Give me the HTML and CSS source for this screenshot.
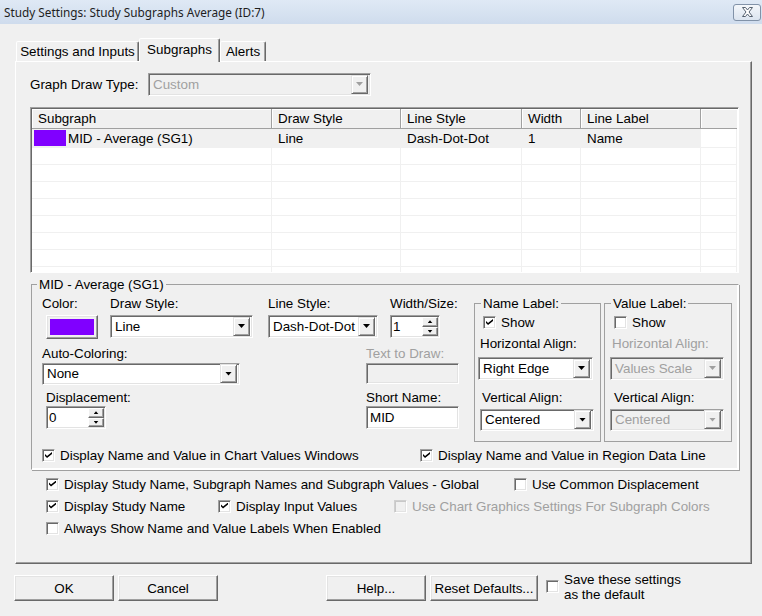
FILE: index.html
```html
<!doctype html>
<html>
    <head>
        <meta charset="UTF-8">
        <title>Study Settings</title>
        <link rel="stylesheet" href="styles.css">
    </head>
    <body>
        <div class="titlebar">
            <span class="title">Study Settings: Study Subgraphs Average (ID:7)</span>
            <div class="close">
                <svg width="13" height="10" viewBox="0 0 13 10"><path d="M1.5 0.5h3l2 2.5 2-2.5h3l-3.5 4.5 3.5 4.5h-3l-2-2.5-2 2.5h-3l3.5-4.5z" fill="#fff" stroke="#55606f" stroke-width="1" stroke-linejoin="round"/></svg>
            </div>
        </div>

        <div class="tabs">
            <div class="tab t-settings">Settings and Inputs</div>
            <div class="tab t-sub active">Subgraphs</div>
            <div class="tab t-alerts">Alerts</div>
        </div>

        <div class="panel">
            <div class="drawtype">
                <span class="dt-label">Graph Draw Type:</span>
                <div class="combo off c-gdt"><span class="val">Custom</span><span class="drop"></span></div>
            </div>

            <div class="list">
                <div class="lrow lhead">
                    <div class="c1">Subgraph</div>
                    <div class="c2">Draw Style</div>
                    <div class="c3">Line Style</div>
                    <div class="c4">Width</div>
                    <div class="c5">Line Label</div>
                    <div class="c6"></div>
                </div>
                <div class="lrow ldata">
                    <div class="c1"><span class="swatch"></span>MID - Average (SG1)</div>
                    <div class="c2">Line</div>
                    <div class="c3">Dash-Dot-Dot</div>
                    <div class="c4">1</div>
                    <div class="c5">Name</div>
                    <div class="c6"></div>
                </div>
                <div class="lrow"><div class="c1"></div><div class="c2"></div><div class="c3"></div><div class="c4"></div><div class="c5"></div><div class="c6"></div></div>
                <div class="lrow"><div class="c1"></div><div class="c2"></div><div class="c3"></div><div class="c4"></div><div class="c5"></div><div class="c6"></div></div>
                <div class="lrow"><div class="c1"></div><div class="c2"></div><div class="c3"></div><div class="c4"></div><div class="c5"></div><div class="c6"></div></div>
                <div class="lrow"><div class="c1"></div><div class="c2"></div><div class="c3"></div><div class="c4"></div><div class="c5"></div><div class="c6"></div></div>
                <div class="lrow"><div class="c1"></div><div class="c2"></div><div class="c3"></div><div class="c4"></div><div class="c5"></div><div class="c6"></div></div>
                <div class="lrow"><div class="c1"></div><div class="c2"></div><div class="c3"></div><div class="c4"></div><div class="c5"></div><div class="c6"></div></div>
                <div class="lrow"><div class="c1"></div><div class="c2"></div><div class="c3"></div><div class="c4"></div><div class="c5"></div><div class="c6"></div></div>
                <div class="lrow"><div class="c1"></div><div class="c2"></div><div class="c3"></div><div class="c4"></div><div class="c5"></div><div class="c6"></div></div>
            </div>

            <fieldset class="group">
                <legend>MID - Average (SG1)</legend>
                <div class="gbody">
                    <div class="gleft">
                        <div class="frow rowa">
                            <div class="field f-color">
                                <span>Color:</span>
                                <div class="colorbtn"><span class="chip"></span></div>
                            </div>
                            <div class="field f-draw">
                                <span>Draw Style:</span>
                                <div class="combo c-draw"><span class="val">Line</span><span class="drop"></span></div>
                            </div>
                            <div class="field f-line">
                                <span>Line Style:</span>
                                <div class="combo c-line"><span class="val">Dash-Dot-Dot</span><span class="drop"></span></div>
                            </div>
                            <div class="field">
                                <span>Width/Size:</span>
                                <div class="spin s-width"><span class="val">1</span><span class="updown"><i class="up"></i><i class="dn"></i></span></div>
                            </div>
                        </div>
                        <div class="frow rowb">
                            <div class="field f-auto">
                                <span>Auto-Coloring:</span>
                                <div class="combo c-auto"><span class="val">None</span><span class="drop"></span></div>
                            </div>
                            <div class="field">
                                <span class="dim">Text to Draw:</span>
                                <div class="edit off e-text"></div>
                            </div>
                        </div>
                        <div class="frow rowc">
                            <div class="field f-disp">
                                <span>Displacement:</span>
                                <div class="spin s-disp"><span class="val">0</span><span class="updown"><i class="up"></i><i class="dn"></i></span></div>
                            </div>
                            <div class="field f-short">
                                <span>Short Name:</span>
                                <div class="edit e-short">MID</div>
                            </div>
                        </div>
                    </div>

                    <fieldset class="lgroup g-name">
                        <legend>Name Label:</legend>
                        <label class="chkline show"><span class="chk on"></span>Show</label>
                        <div class="glbl gl-h">Horizontal Align:</div>
                        <div class="combo c-nh"><span class="val">Right Edge</span><span class="drop"></span></div>
                        <div class="glbl gl-v">Vertical Align:</div>
                        <div class="combo c-nv"><span class="val">Centered</span><span class="drop"></span></div>
                    </fieldset>

                    <fieldset class="lgroup g-value">
                        <legend>Value Label:</legend>
                        <label class="chkline show"><span class="chk"></span>Show</label>
                        <div class="glbl gl-h dim">Horizontal Align:</div>
                        <div class="combo off c-vh"><span class="val">Values Scale</span><span class="drop"></span></div>
                        <div class="glbl gl-v">Vertical Align:</div>
                        <div class="combo off c-vv"><span class="val">Centered</span><span class="drop"></span></div>
                    </fieldset>
                </div>

                <div class="gchecks">
                    <label class="chkline gc-first"><span class="chk on"></span>Display Name and Value in Chart Values Windows</label>
                    <label class="chkline"><span class="chk on"></span>Display Name and Value in Region Data Line</label>
                </div>
            </fieldset>

            <div class="globals">
                <div class="grow">
                    <label class="chkline w-global"><span class="chk on"></span>Display Study Name, Subgraph Names and Subgraph Values - Global</label>
                    <label class="chkline"><span class="chk"></span>Use Common Displacement</label>
                </div>
                <div class="grow">
                    <label class="chkline w-study"><span class="chk on"></span>Display Study Name</label>
                    <label class="chkline w-input"><span class="chk on"></span>Display Input Values</label>
                    <label class="chkline dim"><span class="chk off"></span>Use Chart Graphics Settings For Subgraph Colors</label>
                </div>
                <div class="grow">
                    <label class="chkline"><span class="chk"></span>Always Show Name and Value Labels When Enabled</label>
                </div>
            </div>
        </div>

        <div class="buttons">
            <div class="btn">OK</div>
            <div class="btn b-cancel">Cancel</div>
            <div class="btn b-help">Help...</div>
            <div class="btn b-reset">Reset Defaults...</div>
            <span class="chk save-chk"></span>
            <div class="save-text">Save these settings<br>as the default</div>
        </div>
    </body>
</html>
```

FILE: styles.css
```css
*{
    margin: 0;
    padding: 0;
    box-sizing: border-box;
}
body{
    width: 762px;
    height: 616px;
    overflow: hidden;
    background: #f0f0f0;
    color: #000;
    font: 13.4px/15px "Liberation Sans", Arial, sans-serif;
}

/* title bar */
.titlebar{
    height: 24px;
    display: flex;
    align-items: center;
    justify-content: space-between;
    padding: 0 1px 0 4px;
    background: linear-gradient(#dfe9f5, #cfdced);
}
.title{
    font: 11.8px "Noto Sans", "Open Sans", sans-serif;
    color: #1e1e1e;
}
.close{
    width: 28px;
    height: 17px;
    display: flex;
    align-items: center;
    justify-content: center;
    border: 1px solid #8192a8;
    border-radius: 3px;
    background: linear-gradient(#f4f7fb, #dbe4ef);
}

/* tabs */
.tabs{
    height: 37px;
    display: flex;
    align-items: flex-end;
    padding-left: 16px;
}
.tab{
    height: 20px;
    display: flex;
    align-items: center;
    justify-content: center;
    background: #f0f0f0;
    border: 1px solid;
    border-bottom: 0;
    border-color: #fff #696969 transparent #fff;
    border-radius: 2px 2px 0 0;
    box-shadow: inset -1px 0 #a0a0a0;
}
.t-settings{ width: 123px; }
.t-sub{ width: 81px; }
.t-alerts{ width: 46px; }
.tab.active{
    position: relative;
    z-index: 1;
    height: 24px;
    margin-bottom: -1px;
    padding-bottom: 2px;
}

/* page */
.panel{
    margin-left: 15px;
    width: 737px;
    height: 503px;
    padding: 11px 0 0 14px;
    border: 1px solid;
    border-color: #fff #696969 #696969 #fff;
    box-shadow: inset -1px -1px #a0a0a0;
}
.drawtype{
    display: flex;
    align-items: center;
}
.dt-label{ width: 118px; }
.dim{ color: #a0a0a0; }

/* combo / edit / spin */
.combo, .edit, .spin{
    display: flex;
    align-items: center;
    height: 23px;
    background: #fff;
    border: 1px solid;
    border-color: #a0a0a0 #fff #fff #a0a0a0;
    box-shadow: inset 1px 1px #696969, inset -1px -1px #e3e3e3;
}
.combo{ padding: 1px 2px 2px 1px; }
.combo .val{
    flex: 1;
    padding-left: 3px;
    white-space: nowrap;
}
.drop{
    width: 17px;
    height: 19px;
    display: flex;
    align-items: center;
    justify-content: center;
    background: #f0f0f0;
    border: 1px solid;
    border-color: #e3e3e3 #696969 #696969 #e3e3e3;
    box-shadow: inset 1px 1px #fff, inset -1px -1px #a0a0a0;
}
.drop::after{
    content: "";
    width: 7px;
    height: 4px;
    background: #000;
    clip-path: polygon(0 0, 100% 0, 50% 100%);
}
.off{
    background: #f0f0f0;
    color: #a0a0a0;
}
.off .drop::after{ background: #a0a0a0; }
.edit{ padding-left: 3px; }
.spin{ padding: 1px 1px 1px 2px; }
.spin .val{ flex: 1; }
.updown{
    width: 16px;
    height: 100%;
    display: flex;
    flex-direction: column;
}
.updown i{
    flex: 1;
    display: flex;
    align-items: center;
    justify-content: center;
    background: #f0f0f0;
    border: 1px solid;
    border-color: #fff #696969 #696969 #fff;
    box-shadow: inset -1px -1px #a0a0a0;
}
.updown i::after{
    content: "";
    width: 5px;
    height: 3px;
    background: #000;
}
.updown .up::after{ clip-path: polygon(50% 0, 100% 100%, 0 100%); }
.updown .dn::after{ clip-path: polygon(0 0, 100% 0, 50% 100%); }

.c-gdt{ width: 223px; }
.c-draw{ width: 143px; }
.c-line{ width: 110px; }
.c-auto{ width: 198px; height: 22px; }
.s-width{ width: 50px; }
.s-disp{ width: 60px; }
.e-text{ width: 93px; height: 21px; }
.e-short{ width: 93px; }

/* list view */
.list{
    margin-top: 11px;
    width: 709px;
    height: 166px;
    overflow: hidden;
    padding: 1px;
    background: #fff;
    border: 1px solid;
    border-color: #a0a0a0 #fff #fff #a0a0a0;
    box-shadow: inset 1px 1px #696969;
}
.lrow{
    display: flex;
    height: 17px;
}
.lrow > div{
    flex: none;
    display: flex;
    align-items: center;
    white-space: nowrap;
    border-right: 1px solid #f0f0f0;
    border-bottom: 1px solid #f0f0f0;
}
.c1{ width: 240px; }
.c2{ width: 129px; }
.c3{ width: 121px; }
.c4{ width: 59px; }
.c5{ width: 120px; }
.c6{ width: 36px; }
.lhead{ height: 20px; }
.lhead > div{
    padding-left: 6px;
    background: #f0f0f0;
    border-right-color: #a0a0a0;
    border-bottom-color: #a0a0a0;
    box-shadow: inset 1px 1px #fff;
}
.lhead .c6{ border-right: 0; }
.ldata{ height: 19px; }
.ldata > div{
    padding-left: 6px;
    background: #f0f0f0;
}
.ldata .c1{ padding-left: 2px; }
.ldata .c6{ background: #fff; }
.swatch{
    width: 32px;
    height: 16px;
    margin-right: 2px;
    background: #8000ff;
}

/* group boxes */
fieldset{
    border: 1px solid #a0a0a0;
}
legend{
    padding: 0 2px;
    line-height: 15px;
}
.group{
    margin: 4px 0 0 1px;
    width: 708px;
    height: 193px;
    border-right-color: #fff;
    border-bottom-color: #fff;
    box-shadow: -1px -1px 0 #fff inset, 1px 1px 0 #a0a0a0;
}
.group > legend{ margin-left: 5px; }
.gbody{ display: flex; }
.gleft{ width: 442px; }
.frow{ display: flex; }
.field{
    display: flex;
    flex-direction: column;
    align-items: flex-start;
}
.rowa{ padding: 4px 0 0 10px; }
.rowa .field > div{ margin-top: 4px; }
.f-color{ width: 68px; }
.f-draw{ width: 158px; }
.f-line{ width: 122px; }
.colorbtn{
    width: 52px;
    height: 24px;
    margin-left: 4px;
    padding: 3px;
    background: #f0f0f0;
    border: 1px solid;
    border-color: #fff #696969 #696969 #fff;
    box-shadow: inset -1px -1px #a0a0a0, inset 1px 1px #e3e3e3;
}
.chip{
    display: block;
    width: 100%;
    height: 100%;
    background: #8000ff;
}
.rowb{ padding: 7px 0 0 10px; }
.rowb .field > div{ margin-top: 2px; }
.f-auto{ width: 324px; }
.rowc{ padding: 5px 0 0 14px; }
.rowc .field > div{ margin-top: 1px; }
.f-disp{ width: 320px; }

.lgroup{
    margin-top: 4px;
    height: 146px;
}
.lgroup > legend{ margin-left: 6px; }
.g-name{ width: 127px; }
.g-value{ width: 128px; margin-left: 3px; }
.show{ margin-top: 4px; }
.glbl{ margin-top: 6px; }
.gl-v{ margin-top: 10px; }
.c-nh, .c-vh{ margin-top: 6px; margin-left: 3px; width: 115px; }
.c-nv, .c-vv{ margin-top: 4px; margin-left: 5px; width: 114px; height: 22px; }
.g-name .show{ padding-left: 8px; }
.g-name .gl-h{ padding-left: 5px; }
.g-name .gl-v{ padding-left: 7px; }
.g-value .show{ padding-left: 9px; }
.g-value .gl-h{ padding-left: 7px; }
.g-value .gl-v{ padding-left: 9px; }
.g-value .c-vh{ margin-left: 5px; width: 114px; }

/* check boxes */
.chkline{
    display: flex;
    align-items: center;
    white-space: nowrap;
}
.chk{
    flex: none;
    width: 13px;
    height: 13px;
    margin-right: 5px;
    display: flex;
    align-items: center;
    justify-content: center;
    background: #fff;
    border: 1px solid;
    border-color: #a0a0a0 #fff #fff #a0a0a0;
    box-shadow: inset 1px 1px #696969, inset -1px -1px #e3e3e3;
}
.chk.on::after{
    content: "";
    width: 7px;
    height: 7px;
    background: #000;
    clip-path: polygon(0 29%, 29% 57%, 100% 0, 100% 29%, 29% 86%, 0 57%);
}
.chk.off{
    background: #f0f0f0;
    box-shadow: inset 1px 1px #c8c8c8, inset -1px -1px #e3e3e3;
    border-color: #d0d0d0 #fff #fff #d0d0d0;
}
.gchecks{
    display: flex;
    margin-top: 6px;
    padding-left: 10px;
    height: 15px;
}
.gc-first{ width: 378px; }

.globals{
    margin-top: 3px;
    padding-left: 16px;
}
.grow{
    display: flex;
    height: 22px;
    align-items: center;
}
.w-global{ width: 468px; }
.w-study{ width: 172px; }
.w-input{ width: 176px; }

/* bottom buttons */
.buttons{
    display: flex;
    align-items: flex-start;
    margin-top: 11px;
    padding-left: 14px;
}
.btn{
    width: 100px;
    height: 26px;
    display: flex;
    align-items: center;
    justify-content: center;
    background: #f0f0f0;
    border: 1px solid;
    border-color: #fff #696969 #696969 #fff;
    box-shadow: inset -1px -1px #a0a0a0, inset 1px 1px #e3e3e3;
}
.b-cancel{ margin-left: 4px; }
.b-help{ margin-left: 108px; }
.b-reset{ margin-left: 4px; width: 108px; }
.save-chk{
    margin: 5px 5px 0 8px;
}
.save-text{ margin-top: -3px; }
```
